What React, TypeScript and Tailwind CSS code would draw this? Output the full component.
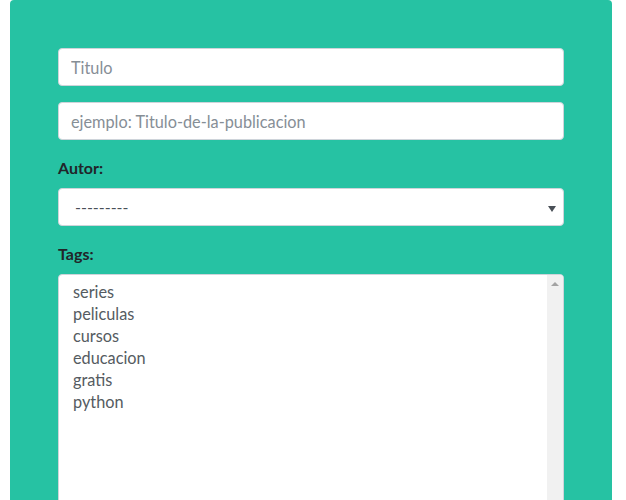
import React from 'react';

const tags = ['series', 'peliculas', 'cursos', 'educacion', 'gratis', 'python'];

const inputClass =
  'block w-full h-[38px] rounded-[4px] border border-[#ced4da] bg-white px-3 text-[16.3px] text-[#495057] placeholder:text-[#868e96] outline-none';

const App: React.FC = () => {
  return (
    <div className="h-[500px] overflow-hidden bg-white font-['Lato','Open_Sans',sans-serif]">
      <div className="ml-[10px] w-[602px] h-[520px] rounded-t-[4px] bg-[#26c2a3] px-12 pt-12">
        <input className={inputClass} placeholder="Titulo" />
        <input className={`${inputClass} mt-4`} placeholder="ejemplo: Titulo-de-la-publicacion" />

        <label className="mt-4 mb-2 block h-6 leading-6 text-[16px] font-bold text-[#212529]">Autor:</label>
        <div className="relative flex h-[38px] items-center rounded-[4px] border border-[#ced4da] bg-white pl-4 text-[16px] text-[#495057]">
          ---------
          <span className="absolute right-[7px] top-[17px] h-0 w-0 border-x-[4px] border-t-[6px] border-x-transparent border-t-[#495057]" />
        </div>

        <label className="mt-4 mb-2 block h-6 leading-6 text-[16px] font-bold text-[#212529]">Tags:</label>
        <div className="flex h-[240px] overflow-hidden rounded-t-[4px] border border-[#ced4da] bg-white">
          <ul className="flex-1 pl-[14px] pt-[6px] text-[16.3px] leading-[22px] text-[#555b61]">
            {tags.map(t => (
              <li key={t}>{t}</li>
            ))}
          </ul>
          <div className="relative w-[16px] bg-[#f1f1f1]">
            <span className="absolute left-[4px] top-[7px] h-0 w-0 border-x-[4px] border-b-[4px] border-x-transparent border-b-[#a3a3a3]" />
          </div>
        </div>
      </div>
    </div>
  );
};

export default App;
